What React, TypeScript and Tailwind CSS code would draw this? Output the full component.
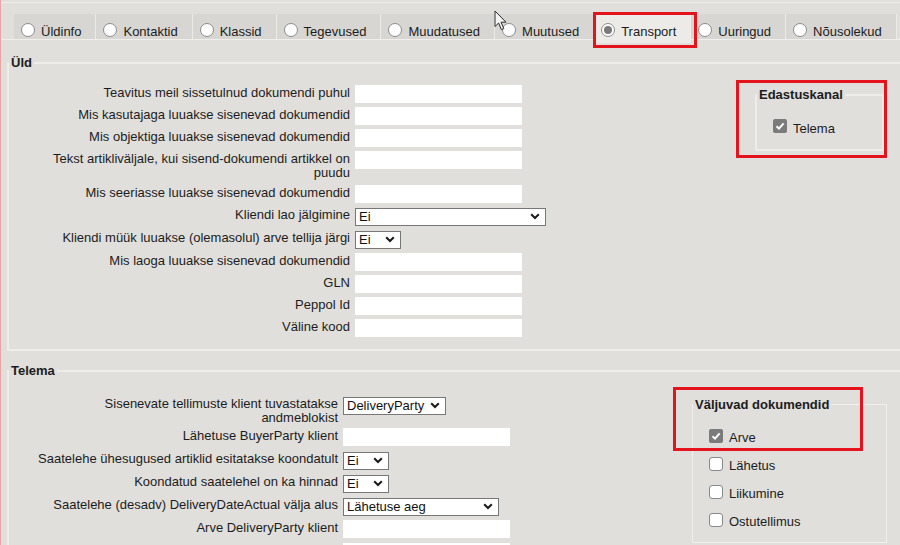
import React from "react";

type Row = {
  label: string[];
  kind: "input" | "select";
  value?: string;
  w?: string;
  h: string;
};

const tabs = [
  "Üldinfo",
  "Kontaktid",
  "Klassid",
  "Tegevused",
  "Muudatused",
  "Muutused",
  "Transport",
  "Uuringud",
  "Nõusolekud",
];

const uldRows: Row[] = [
  { label: ["Teavitus meil sissetulnud dokumendi puhul"], kind: "input", h: "h-[22px]" },
  { label: ["Mis kasutajaga luuakse sisenevad dokumendid"], kind: "input", h: "h-[22px]" },
  { label: ["Mis objektiga luuakse sisenevad dokumendid"], kind: "input", h: "h-[22px]" },
  {
    label: ["Tekst artikliväljale, kui sisend-dokumendi artikkel on", "puudu"],
    kind: "input",
    h: "h-[34px]",
  },
  { label: ["Mis seeriasse luuakse sisenevad dokumendid"], kind: "input", h: "h-[22px]" },
  { label: ["Kliendi lao jälgimine"], kind: "select", value: "Ei", w: "w-[191px]", h: "h-[23px]" },
  {
    label: ["Kliendi müük luuakse (olemasolul) arve tellija järgi"],
    kind: "select",
    value: "Ei",
    w: "w-[46px]",
    h: "h-[23px]",
  },
  { label: ["Mis laoga luuakse sisenevad dokumendid"], kind: "input", h: "h-[22px]" },
  { label: ["GLN"], kind: "input", h: "h-[22px]" },
  { label: ["Peppol Id"], kind: "input", h: "h-[22px]" },
  { label: ["Väline kood"], kind: "input", h: "h-[22px]" },
];

const telemaRows: Row[] = [
  {
    label: ["Sisenevate tellimuste klient tuvastatakse", "andmeblokist"],
    kind: "select",
    value: "DeliveryParty",
    w: "w-[103px]",
    h: "h-[32px]",
  },
  { label: ["Lähetuse BuyerParty klient"], kind: "input", h: "h-[23px]" },
  {
    label: ["Saatelehe ühesugused artiklid esitatakse koondatult"],
    kind: "select",
    value: "Ei",
    w: "w-[46px]",
    h: "h-[23px]",
  },
  {
    label: ["Koondatud saatelehel on ka hinnad"],
    kind: "select",
    value: "Ei",
    w: "w-[46px]",
    h: "h-[23px]",
  },
  {
    label: ["Saatelehe (desadv) DeliveryDateActual välja alus"],
    kind: "select",
    value: "Lähetuse aeg",
    w: "w-[156px]",
    h: "h-[23px]",
  },
  { label: ["Arve DeliveryParty klient"], kind: "input", h: "h-[23px]" },
  { label: ["Arve BuyerParty klient"], kind: "input", h: "h-[23px]" },
];

function Radio({ on }: { on?: boolean }) {
  return (
    <span className="flex h-[14px] w-[14px] items-center justify-center rounded-full border border-[#8c8c8c] bg-white">
      {on && <span className="h-[8px] w-[8px] rounded-full bg-[#7a7a7a]" />}
    </span>
  );
}

function Check({ on }: { on?: boolean }) {
  if (on) {
    return (
      <span className="flex h-[14px] w-[14px] items-center justify-center rounded-[2px] bg-[#7b7b7b]">
        <svg width="10" height="10" viewBox="0 0 10 10">
          <path d="M1.5 5.2 L4 7.6 L8.6 2.4" fill="none" stroke="white" strokeWidth="2" />
        </svg>
      </span>
    );
  }
  return <span className="h-[14px] w-[14px] rounded-[3px] border border-[#8a8a8a] bg-white" />;
}

function Select({ value, w }: { value: string; w: string }) {
  return (
    <div className={`relative h-[18px] ${w}`}>
      <select
        defaultValue={value}
        className="h-[18px] w-full appearance-none border border-[#777] bg-white pl-[3px] text-[13px] leading-[16px] text-[#111]"
      >
        <option>{value}</option>
      </select>
      <svg
        className="pointer-events-none absolute right-[6px] top-[6px]"
        width="10"
        height="7"
        viewBox="0 0 10 7"
      >
        <path d="M1.2 1.2 L5 5 L8.8 1.2" fill="none" stroke="#1a1a1a" strokeWidth="2" />
      </svg>
    </div>
  );
}

function FormTable({ rows, labelW, ml }: { rows: Row[]; labelW: string; ml: string }) {
  return (
    <table className={`border-collapse ${ml}`}>
      <tbody>
        {rows.map((r) => (
          <tr key={r.label[0]} className={r.h}>
            <td className={`${labelW} whitespace-nowrap pr-[5px] pt-[3px] text-right align-top leading-[14px]`}>
              {r.label.map((l) => (
                <div key={l}>{l}</div>
              ))}
            </td>
            <td className="pt-[2px] align-top">
              {r.kind === "input" ? (
                <input className="block h-[18px] w-[167px] bg-white outline-none" />
              ) : (
                <Select value={r.value ?? ""} w={r.w ?? ""} />
              )}
            </td>
          </tr>
        ))}
      </tbody>
    </table>
  );
}

export default function App() {
  return (
    <div
      className="relative h-[545px] w-[900px] overflow-hidden border-l border-[#e9a3a3] bg-[#e0dfdb] pt-[2px] text-[13px] text-[#1c1c1c]"
      style={{ fontFamily: '"Liberation Sans", Arial, sans-serif' }}
    >
      {/* Tabs */}
      <div className="border-t border-[#efeeea] pt-[11px]">
        <div className="border-b border-[#f0efeb] pl-[13px]">
          <div className="flex h-[25px] items-start">
            {tabs.map((t) => {
              const on = t === "Transport";
              return (
                <div
                  key={t}
                  className={
                    on
                      ? "relative z-10 flex h-[29px] shrink-0 items-start border-r border-[#efeeea] bg-[#ecebe7] pl-[7px] pr-[14px] pt-[7px]"
                      : "flex h-[25px] shrink-0 items-start border-r border-[#ecebe7] bg-[#d7d6d2] pl-[7px] pr-[14px] pt-[7px]"
                  }
                >
                  <div className="flex items-center gap-[6px]">
                    <Radio on={on} />
                    <span className="pt-[3px] leading-[15px]">{t}</span>
                  </div>
                </div>
              );
            })}
          </div>
        </div>
      </div>

      {/* Üld */}
      <fieldset className="ml-[6px] mt-[15px] w-[910px] border-2 border-[#eeede9] pb-[10px]">
        <legend className="px-[2px] text-[13px] font-bold leading-[15px]">Üld</legend>
        <div className="flex items-start">
          <div className="mt-[13px]">
            <FormTable rows={uldRows} labelW="w-[308px]" ml="ml-[38px]" />
          </div>
          <fieldset className="ml-auto mr-[31px] mt-[17px] w-[129px] border-2 border-[#eeede9]">
            <legend className="px-[2px] text-[13px] font-bold leading-[15px]">Edastuskanal</legend>
            <div className="pb-[9px] pl-[16px] pt-[10px]">
              <label className="flex h-[28px] items-center gap-[6px]">
                <Check on />
                <span className="pt-[5px]">Telema</span>
              </label>
            </div>
          </fieldset>
        </div>
      </fieldset>

      {/* Telema */}
      <fieldset className="ml-[6px] mt-[12px] w-[910px] border-2 border-[#eeede9] pb-[10px]">
        <legend className="px-[2px] text-[13px] font-bold leading-[15px]">Telema</legend>
        <div className="flex items-start">
          <div className="mt-[16px]">
            <FormTable rows={telemaRows} labelW="w-[309px]" ml="ml-[25px]" />
          </div>
          <fieldset className="ml-auto mr-[28px] mt-[19px] w-[195px] border border-[#f1f0ec]">
            <legend className="px-[2px] text-[13px] font-bold leading-[15px]">Väljuvad dokumendid</legend>
            <div className="pb-[8px] pl-[16px] pt-[10px]">
              {["Arve", "Lähetus", "Liikumine", "Ostutellimus"].map((d) => (
                <label key={d} className="flex h-[28px] items-center gap-[6px]">
                  <Check on={d === "Arve"} />
                  <span className="pt-[3px]">{d}</span>
                </label>
              ))}
            </div>
          </fieldset>
        </div>
      </fieldset>

      {/* red highlight boxes */}
      <div className="pointer-events-none absolute left-[592px] top-[12px] z-20 h-[36px] w-[104px] border-[3px] border-[#e3141c]" />
      <div className="pointer-events-none absolute left-[735px] top-[80px] z-20 h-[78px] w-[151px] border-[3px] border-[#e3141c]" />
      <div className="pointer-events-none absolute left-[672px] top-[387px] z-20 h-[64px] w-[190px] border-[3px] border-[#e3141c]" />

      {/* mouse pointer */}
      <svg
        className="pointer-events-none absolute left-[493px] top-[10px] z-30"
        width="14"
        height="21"
        viewBox="0 0 14 21"
      >
        <path
          d="M1 1 L1 16.5 L4.6 13 L7.4 19.6 L9.8 18.6 L7 12.2 L12 12.2 Z"
          fill="#f4f4f4"
          stroke="#2a2a2a"
          strokeWidth="1"
          strokeLinejoin="round"
        />
      </svg>
    </div>
  );
}
